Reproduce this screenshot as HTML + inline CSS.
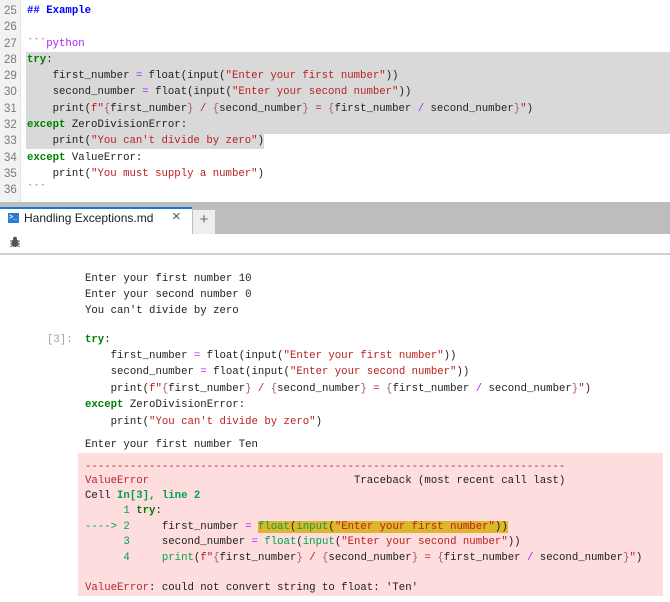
<!DOCTYPE html>
<html><head><meta charset="utf-8"><style>
*{margin:0;padding:0;box-sizing:border-box}
body{width:670px;height:602px;overflow:hidden;background:#fff;position:relative;font-family:"Liberation Mono",monospace;font-size:10.68px;color:#212121}
.l{position:absolute;white-space:pre;line-height:15px;margin-top:1px}
.n{position:absolute;left:4px;color:#7a7a7a;font-family:"Liberation Sans",sans-serif;font-size:11.5px;line-height:15px;margin-top:1px}
.k{color:#008000;font-weight:bold}
.s{color:#ba2121}
.o{color:#aa22ff}
.b{color:#a45a77}
.md{color:#0000ff;font-weight:bold}
.bt{color:#aa22ff}
.er{color:#b22b31}
.g{color:#00a250}
.gb{color:#00a250;font-weight:bold}
.hl{background:#ddb62b}
</style></head><body>
<div style="position:absolute;left:0;top:0;width:21px;height:202px;background:#f2f2f2;border-right:1px solid #e2e2e2"></div>
<div style="position:absolute;left:26px;top:52px;width:644px;height:82px;background:#d9d9d9"></div>
<div style="position:absolute;left:26px;top:133px;width:238px;height:16px;background:#d9d9d9"></div>

<div class="n" style="top:3px">25</div><div class="n" style="top:19px">26</div><div class="n" style="top:36px">27</div><div class="n" style="top:52px">28</div><div class="n" style="top:68px">29</div><div class="n" style="top:84px">30</div><div class="n" style="top:101px">31</div><div class="n" style="top:117px">32</div><div class="n" style="top:133px">33</div><div class="n" style="top:150px">34</div><div class="n" style="top:166px">35</div><div class="n" style="top:182px">36</div>

<div class="l md" style="left:27px;top:3px">## Example</div>
<div class="l bt" style="left:27px;top:36px">&#96;&#96;&#96;python</div>
<div class="l" style="left:27px;top:52px"><span class="k">try</span>:</div>
<div class="l" style="left:27px;top:68px">    first_number <span class="o">=</span> float(input(<span class="s">"Enter your first number"</span>))</div>
<div class="l" style="left:27px;top:84px">    second_number <span class="o">=</span> float(input(<span class="s">"Enter your second number"</span>))</div>
<div class="l" style="left:27px;top:101px">    print(<span class="s">f"</span><span class="b">{</span>first_number<span class="b">}</span><span class="s"> / </span><span class="b">{</span>second_number<span class="b">}</span><span class="s"> = </span><span class="b">{</span>first_number <span class="o">/</span> second_number<span class="b">}</span><span class="s">"</span>)</div>
<div class="l" style="left:27px;top:117px"><span class="k">except</span> ZeroDivisionError:</div>
<div class="l" style="left:27px;top:133px">    print(<span class="s">"You can't divide by zero"</span>)</div>
<div class="l" style="left:27px;top:150px"><span class="k">except</span> ValueError:</div>
<div class="l" style="left:27px;top:166px">    print(<span class="s">"You must supply a number"</span>)</div>
<div class="l bt" style="left:27px;top:182px">&#96;&#96;&#96;</div>

<div style="position:absolute;left:0;top:202px;width:670px;height:32px;background:#bdbdbd"></div>
<div style="position:absolute;left:0;top:207px;width:192px;height:27px;background:#fff;border-top:2px solid #1976d2"></div>
<div style="position:absolute;left:8px;top:213px;width:11px;height:10px;background:#2a7bd3;color:#fff;font-size:7px;line-height:10px;font-family:'Liberation Sans',sans-serif;font-weight:bold;padding-left:1px">&gt;_</div>
<div style="position:absolute;left:24px;top:211px;font-family:'Liberation Sans',sans-serif;font-size:12px;color:#212121">Handling Exceptions.md</div>
<div style="position:absolute;left:172px;top:208px;font-family:'Liberation Sans',sans-serif;font-size:15px;color:#555">×</div>
<div style="position:absolute;left:193px;top:210px;width:22px;height:24px;background:#eee;color:#666;font-family:'Liberation Sans',sans-serif;font-size:15px;text-align:center;line-height:20px">+</div>
<div style="position:absolute;left:0;top:234px;width:670px;height:21px;background:#fff;border-bottom:2px solid #cfcfcf"></div>
<svg style="position:absolute;left:9px;top:236px" width="12" height="12" viewBox="0 0 12 12"><ellipse cx="6" cy="7" rx="3.5" ry="4" fill="#555"/><circle cx="6" cy="2.8" r="2" fill="#555"/><path d="M1 5h10M1 8h10M1.5 11l2-1.5M10.5 11l-2-1.5" stroke="#555" stroke-width="1"/></svg>

<div class="l" style="left:85px;top:271px">Enter your first number 10</div>
<div class="l" style="left:85px;top:287px">Enter your second number 0</div>
<div class="l" style="left:85px;top:303px">You can't divide by zero</div>

<div class="l" style="left:47px;top:332px;color:#9aa4b2">[3]:</div>
<div class="l" style="left:85px;top:332px"><span class="k">try</span>:</div>
<div class="l" style="left:85px;top:348px">    first_number <span class="o">=</span> float(input(<span class="s">"Enter your first number"</span>))</div>
<div class="l" style="left:85px;top:364px">    second_number <span class="o">=</span> float(input(<span class="s">"Enter your second number"</span>))</div>
<div class="l" style="left:85px;top:381px">    print(<span class="s">f"</span><span class="b">{</span>first_number<span class="b">}</span><span class="s"> / </span><span class="b">{</span>second_number<span class="b">}</span><span class="s"> = </span><span class="b">{</span>first_number <span class="o">/</span> second_number<span class="b">}</span><span class="s">"</span>)</div>
<div class="l" style="left:85px;top:397px"><span class="k">except</span> ZeroDivisionError:</div>
<div class="l" style="left:85px;top:414px">    print(<span class="s">"You can't divide by zero"</span>)</div>
<div class="l" style="left:85px;top:437px">Enter your first number Ten</div>

<div style="position:absolute;left:78px;top:453px;width:585px;height:143px;background:#fddddd"></div>
<div class="l er" style="left:85px;top:459px">---------------------------------------------------------------------------</div>
<div class="l" style="left:85px;top:473px"><span class="er">ValueError</span>                                Traceback (most recent call last)</div>
<div class="l" style="left:85px;top:488px">Cell <span class="gb">In[3], line 2</span></div>
<div class="l" style="left:85px;top:503px"><span class="g">      1</span> <span class="k">try</span>:</div>
<div class="l" style="left:85px;top:519px"><span class="g">----&gt; 2</span>     first_number <span class="o">=</span> <span class="hl"><span class="g">float</span>(<span class="g">input</span>(<span class="s">"Enter your first number"</span>))</span></div>
<div class="l" style="left:85px;top:534px"><span class="g">      3</span>     second_number <span class="o">=</span> <span class="g">float</span>(<span class="g">input</span>(<span class="s">"Enter your second number"</span>))</div>
<div class="l" style="left:85px;top:550px"><span class="g">      4</span>     <span class="g">print</span>(<span class="s">f"</span><span class="b">{</span>first_number<span class="b">}</span><span class="s"> / </span><span class="b">{</span>second_number<span class="b">}</span><span class="s"> = </span><span class="b">{</span>first_number <span class="o">/</span> second_number<span class="b">}</span><span class="s">"</span>)</div>
<div class="l" style="left:85px;top:580px"><span class="er">ValueError</span>: could not convert string to float: 'Ten'</div>
</body></html>
